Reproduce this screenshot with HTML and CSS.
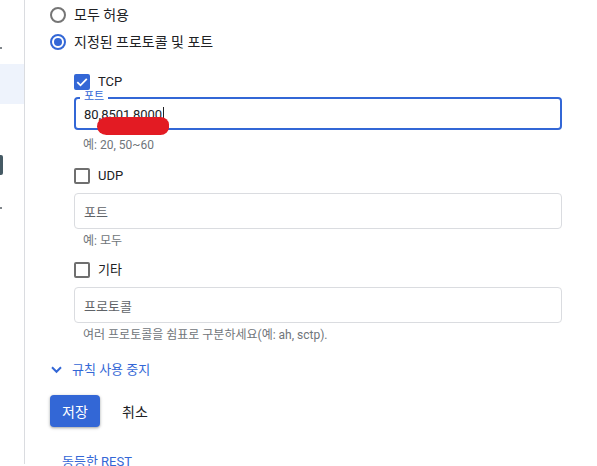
FILE: index.html
```html
<!DOCTYPE html>
<html lang="ko">
<head>
<meta charset="utf-8">
<link rel="stylesheet" href="styles.css">
</head>
<body>
<div class="page">
  <aside class="sidebar">
    <div class="dot dot-a"></div>
    <div class="side-active"></div>
    <div class="side-pill"></div>
    <div class="dot dot-b"></div>
  </aside>
  <main class="main">
    <div class="radio-row">
      <span class="radio"></span>
      <span class="label">모두 허용</span>
    </div>
    <div class="radio-row">
      <span class="radio checked"><span class="radio-dot"></span></span>
      <span class="label">지정된 프로토콜 및 포트</span>
    </div>

    <div class="proto">
      <div class="check-row tcp">
        <span class="checkbox checked">
          <svg viewBox="0 0 16 16" width="16" height="16"><path d="M3.3 8.2 L6.5 11.3 L12.8 4.8" fill="none" stroke="#fff" stroke-width="1.8"/></svg>
        </span>
        <span class="label">TCP</span>
      </div>
      <div class="field focused">
        <span class="float-label">포트</span>
        <span class="value">80,8501,8000</span><span class="caret"></span>
        <span class="scribble"></span>
      </div>
      <div class="hint hint-first">예: 20, 50~60</div>

      <div class="check-row udp">
        <span class="checkbox"></span>
        <span class="label">UDP</span>
      </div>
      <div class="field">
        <span class="placeholder">포트</span>
      </div>
      <div class="hint">예: 모두</div>

      <div class="check-row other">
        <span class="checkbox"></span>
        <span class="label">기타</span>
      </div>
      <div class="field">
        <span class="placeholder">프로토콜</span>
      </div>
      <div class="hint">여러 프로토콜을 쉼표로 구분하세요(예: ah, sctp).</div>
    </div>

    <div class="toggle">
      <svg class="chev" viewBox="0 0 11 8" width="11" height="8"><path d="M1 1.3 L5.5 5.8 L10 1.3" fill="none" stroke="#3367d6" stroke-width="2"/></svg>
      <span>규칙 사용 중지</span>
    </div>

    <div class="actions">
      <button class="btn-primary">저장</button>
      <button class="btn-text">취소</button>
    </div>

    <div class="rest">동등한 REST</div>
  </main>
</div>
</body>
</html>
```
FILE: styles.css
```css
html, body {
  margin: 0;
  padding: 0;
  background: #fff;
}
body {
  font-family: Roboto, "Noto Sans CJK KR", sans-serif;
  color: #202124;
  overflow: hidden;
}
.page {
  display: flex;
  height: 466px;
}
.sidebar {
  position: relative;
  width: 24px;
  height: 464px;
  border-right: 1px solid #dadce0;
  flex: none;
}
.dot {
  position: absolute;
  left: 0;
  width: 2px;
  height: 2px;
  background: #80868b;
}
.dot-a { top: 47px; }
.dot-b { top: 207px; }
.side-active {
  position: absolute;
  left: 0;
  top: 64px;
  width: 24px;
  height: 40px;
  background: #eef3fc;
}
.side-pill {
  position: absolute;
  left: -3px;
  top: 155px;
  width: 6px;
  height: 20px;
  border-radius: 2px;
  background: #455a64;
}
.main {
  flex: 1;
  padding-left: 25px;
  padding-top: 4px;
}
.radio-row {
  display: flex;
  align-items: center;
  height: 22px;
  margin-bottom: 5px;
  font-size: 14px;
}
.radio {
  box-sizing: border-box;
  width: 16px;
  height: 16px;
  border: 2px solid #757575;
  border-radius: 50%;
  margin-right: 8px;
  display: flex;
  align-items: center;
  justify-content: center;
}
.radio.checked { border-color: #3367d6; }
.radio-dot {
  width: 8px;
  height: 8px;
  border-radius: 50%;
  background: #3367d6;
}
.label { line-height: 20px; }
.proto {
  padding-left: 24px;
  width: 488px;
}
.check-row {
  display: flex;
  align-items: center;
  height: 18px;
  font-size: 13px;
  margin-top: 16px;
  margin-bottom: 8px;
}
.check-row.tcp { margin-top: 20px; margin-bottom: 6px; }
.check-row.udp { margin-top: 14px; }
.check-row.other { margin-top: 12px; }
.check-row .label { margin-left: 8px; }
.checkbox {
  box-sizing: border-box;
  width: 16px;
  height: 16px;
  border: 2px solid #6f6f6f;
  border-radius: 2px;
  display: flex;
  align-items: center;
  justify-content: center;
}
.checkbox.checked {
  background: #3367d6;
  border-color: #3367d6;
}
.checkbox svg { flex: none; }
.field {
  position: relative;
  box-sizing: border-box;
  height: 36px;
  border: 1px solid #dadce0;
  border-radius: 4px;
  display: flex;
  align-items: center;
  padding-left: 9px;
  font-size: 13px;
}
.field.focused {
  height: 33px;
  border: 2px solid #3367d6;
  padding-left: 8px;
  padding-top: 2px;
}
.float-label {
  position: absolute;
  left: 4px;
  top: -9px;
  padding: 0 4px;
  background: #fff;
  color: #3367d6;
  font-size: 11px;
  line-height: 14px;
}
.value { color: #202124; }
.caret {
  display: inline-block;
  width: 1px;
  height: 15px;
  background: #202124;
  margin-left: 1px;
}
.scribble {
  position: absolute;
  left: 21px;
  top: 18px;
  width: 72px;
  height: 18px;
  background: #e31b23;
  border-radius: 10px 9px 9px 10px / 10px 8px 8px 9px;
}
.placeholder { color: #5f6368; }
.hint {
  font-size: 12px;
  color: #70757a;
  padding-left: 9px;
  margin-top: 4px;
  line-height: 16px;
}
.hint.hint-first { margin-top: 7px; }
.toggle {
  display: flex;
  align-items: center;
  margin-top: 17px;
  color: #3367d6;
  font-size: 13px;
  line-height: 20px;
}
.chev { margin-left: 1px; margin-right: 10px; }
.actions {
  display: flex;
  align-items: center;
  margin-top: 15px;
}
.btn-primary {
  font-family: inherit;
  font-size: 14px;
  color: #fff;
  background: #3367d6;
  border: none;
  border-radius: 4px;
  width: 50px;
  height: 32px;
  box-shadow: 0 1px 2px rgba(60,64,67,.3), 0 1px 3px 1px rgba(60,64,67,.15);
  padding: 0;
}
.btn-text {
  font-family: inherit;
  font-size: 14px;
  color: #202124;
  background: none;
  border: none;
  padding: 0;
  margin-left: 22px;
}
.rest {
  margin-top: 26px;
  margin-left: 12px;
  font-size: 13px;
  color: #3367d6;
  line-height: 18px;
}
```
